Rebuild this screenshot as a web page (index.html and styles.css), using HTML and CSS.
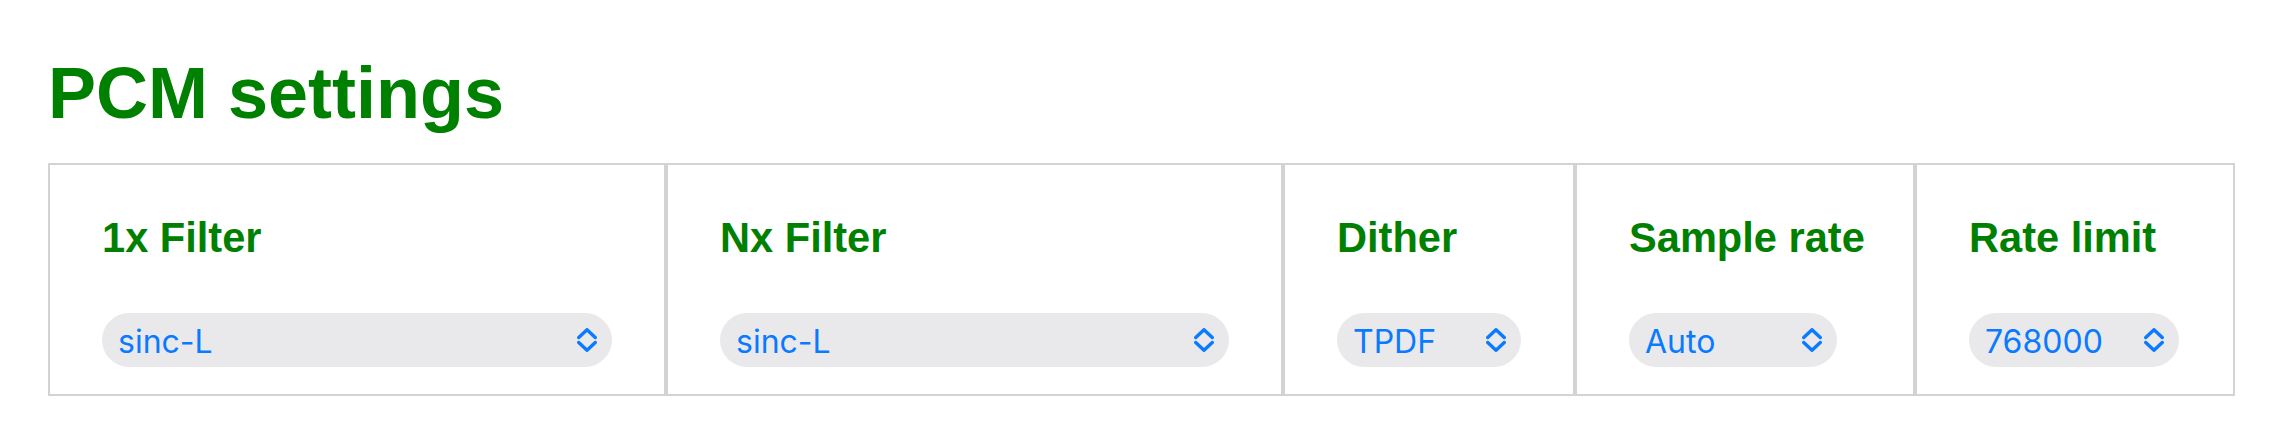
FILE: index.html
```html
<!DOCTYPE html>
<html lang="en">
<head>
<meta charset="utf-8">
<title>PCM settings</title>
<link rel="stylesheet" href="styles.css">
</head>
<body>
<div class="page">
  <h1 class="title">PCM settings</h1>
  <div class="settings">
    <div class="cell">
      <h3 class="label">1x Filter</h3>
      <div class="pill pill-full"><span class="value">sinc-L</span><svg class="chev" viewBox="0 0 20 24"><polyline points="1.75,9.5 10,1.75 18.25,9.5"/><polyline points="1.75,14.5 10,22.25 18.25,14.5"/></svg></div>
    </div>
    <div class="cell">
      <h3 class="label">Nx Filter</h3>
      <div class="pill pill-full"><span class="value">sinc-L</span><svg class="chev" viewBox="0 0 20 24"><polyline points="1.75,9.5 10,1.75 18.25,9.5"/><polyline points="1.75,14.5 10,22.25 18.25,14.5"/></svg></div>
    </div>
    <div class="cell">
      <h3 class="label">Dither</h3>
      <div class="pill pill-dither"><span class="value">TPDF</span><svg class="chev" viewBox="0 0 20 24"><polyline points="1.75,9.5 10,1.75 18.25,9.5"/><polyline points="1.75,14.5 10,22.25 18.25,14.5"/></svg></div>
    </div>
    <div class="cell">
      <h3 class="label">Sample rate</h3>
      <div class="pill pill-rate"><span class="value">Auto</span><svg class="chev" viewBox="0 0 20 24"><polyline points="1.75,9.5 10,1.75 18.25,9.5"/><polyline points="1.75,14.5 10,22.25 18.25,14.5"/></svg></div>
    </div>
    <div class="cell">
      <h3 class="label">Rate limit</h3>
      <div class="pill pill-limit"><span class="value">768000</span><svg class="chev" viewBox="0 0 20 24"><polyline points="1.75,9.5 10,1.75 18.25,9.5"/><polyline points="1.75,14.5 10,22.25 18.25,14.5"/></svg></div>
    </div>
  </div>
</div>
</body>
</html>
```
FILE: styles.css
```css
html, body {
  margin: 0;
  padding: 0;
  background: #ffffff;
}

.page {
  padding: 53px 0 0 48px;
  font-family: "Liberation Sans", Arial, sans-serif;
}

.title {
  margin: 0 0 30px 0;
  font-size: 72px;
  line-height: 80px;
  font-weight: bold;
  color: #008000;
}

.settings {
  display: grid;
  grid-template-columns: 618px 617px 292px 340px 320px;
}

.cell {
  box-sizing: border-box;
  border: 2px solid #d3d3d3;
  padding: 49px 52px 27px;
}

.label {
  margin: 0 0 51px;
  font-size: 41.6px;
  line-height: 48px;
  font-weight: bold;
  color: #008000;
  white-space: nowrap;
}

.pill {
  box-sizing: border-box;
  height: 54px;
  border-radius: 27px;
  background: #e9e9eb;
  display: flex;
  align-items: center;
  justify-content: space-between;
  padding: 0 15px 0 16px;
  font-family: Inter, "Noto Sans", sans-serif;
  font-size: 32px;
  color: #0a7aff;
}

.pill-full { width: 100%; }
.pill-dither { width: 184px; }
.pill-rate { width: 208px; }
.pill-limit { width: 210px; }

.value {
  line-height: 50px;
  margin-top: 4px;
}

.chev {
  width: 20px;
  height: 24px;
  flex: none;
  fill: none;
  stroke: #0a7aff;
  stroke-width: 3.4;
  stroke-linecap: round;
  stroke-linejoin: round;
}
```
